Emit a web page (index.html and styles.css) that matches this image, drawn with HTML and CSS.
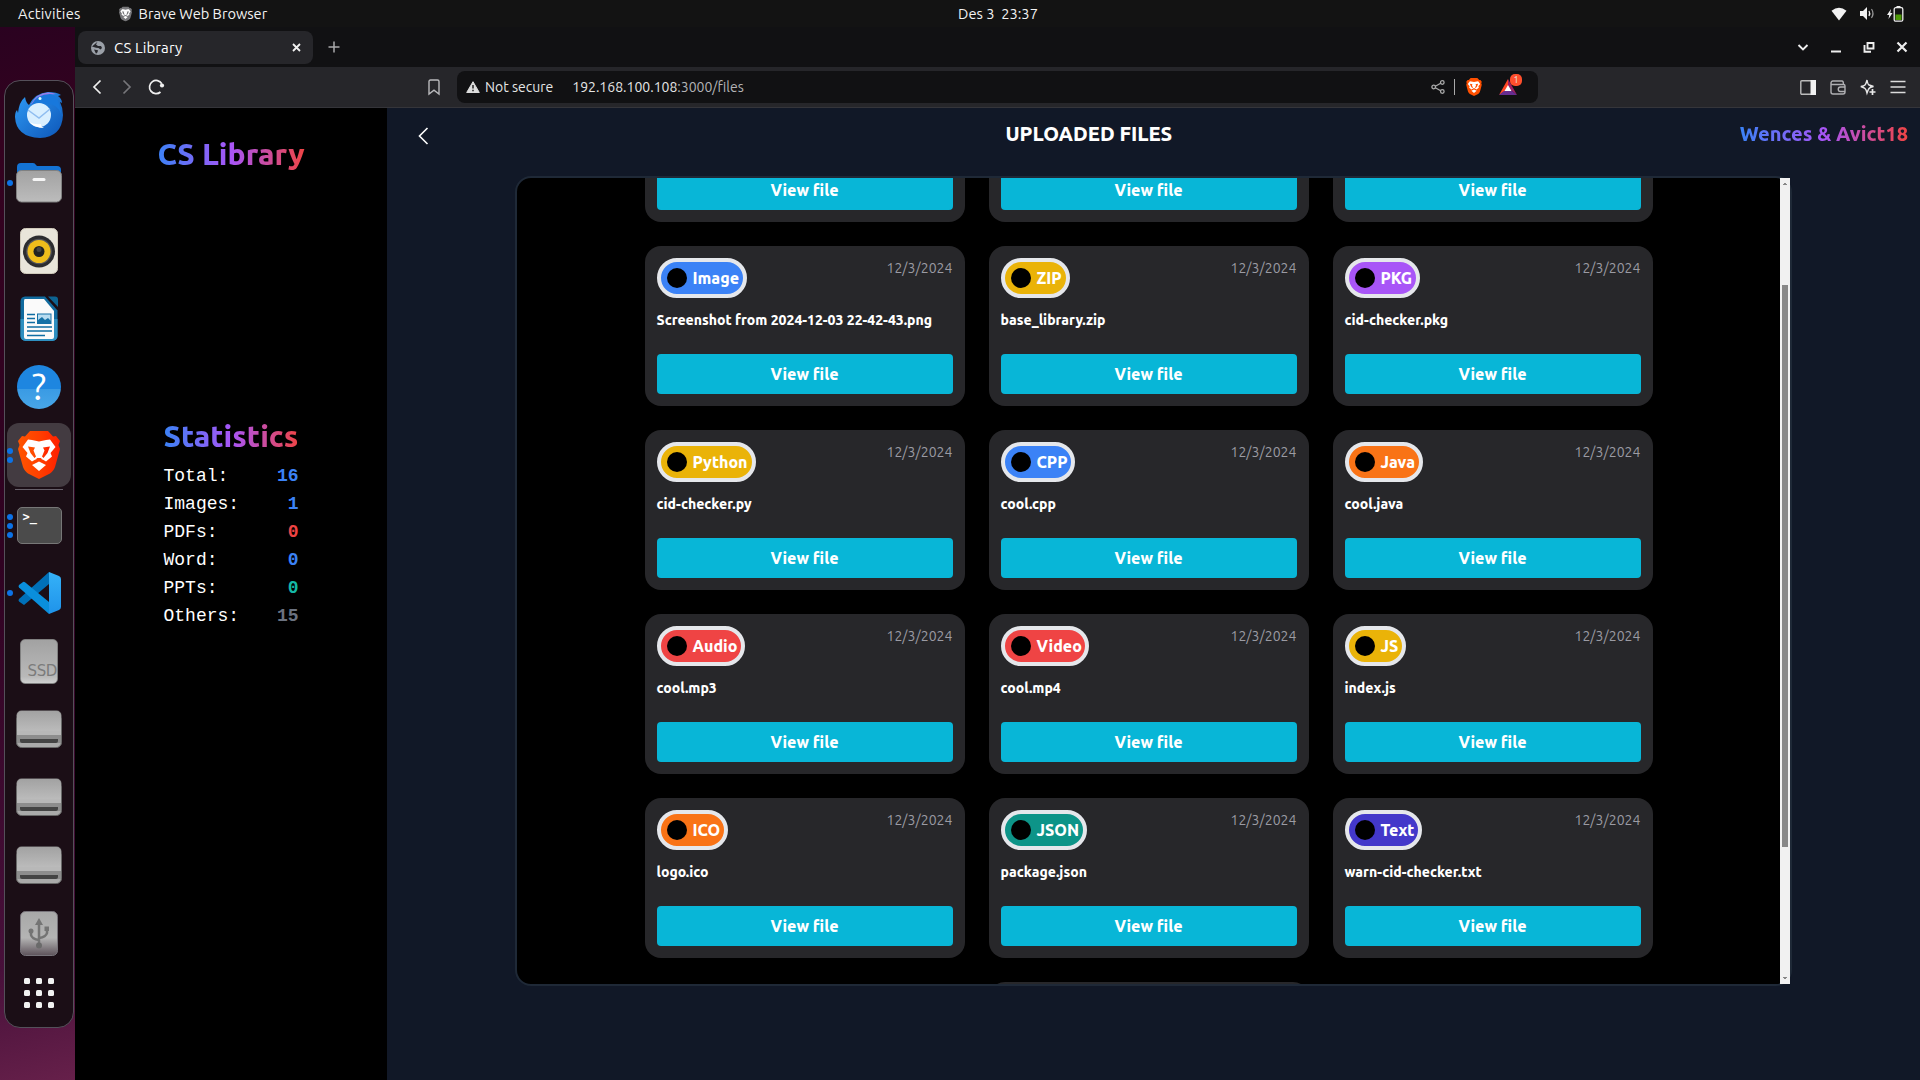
FILE: index.html
```html
<!DOCTYPE html>
<html lang="en">
<head>
<meta charset="utf-8">
<title>CS Library</title>
<link rel="stylesheet" href="styles.css">
</head>
<body>
<svg class="defs" width="0" height="0">
  <defs>
    <linearGradient id="gBird" x1="0" y1="0" x2="1" y2="1"><stop offset="0" stop-color="#2f9bf5"/><stop offset="1" stop-color="#0d56b8"/></linearGradient>
    <linearGradient id="gGrey" x1="0" y1="0" x2="0" y2="1"><stop offset="0" stop-color="#a2a2a2"/><stop offset="1" stop-color="#bcbcbc"/></linearGradient>
    <linearGradient id="gUsb" x1="0" y1="0" x2="0" y2="1"><stop offset="0" stop-color="#a8a8a8"/><stop offset=".6" stop-color="#b4b4b4"/><stop offset="1" stop-color="#5d525a"/></linearGradient>
    <linearGradient id="gLion" x1="0" y1="0" x2="1" y2="0"><stop offset="0" stop-color="#ff5500"/><stop offset=".5" stop-color="#ff4000"/><stop offset="1" stop-color="#ff1f00"/></linearGradient>
    <linearGradient id="gCode" x1="0" y1="0" x2="0" y2="1"><stop offset="0" stop-color="#35b2f8"/><stop offset="1" stop-color="#1f93ea"/></linearGradient>
    <symbol id="drive" viewBox="0 0 46 38">
      <rect x=".5" y=".5" width="45" height="32" rx="5" fill="#8b8b8b"/><rect x=".5" y="5" width="45" height="32.500" rx="5" fill="#8d8d8d" stroke="#686868"/>
      <path d="M1 22V6a5 5 0 0 1 5-5h34a5 5 0 0 1 5 5v16z" fill="url(#gGrey)"/>
      <path d="M1 26h44v6a5 5 0 0 1-5 5H6a5 5 0 0 1-5-5z" fill="#8d8d8d"/>
      <path d="M1 21h44v4H1z" fill="#b8b8b8"/><path d="M1.500 33h43a5 5 0 0 1-4.500 4H6a5 5 0 0 1-4.500-4z" fill="#aaa"/>
      <path d="M4 29h38v2a2 2 0 0 1-2 2H6a2 2 0 0 1-2-2z" fill="#444"/>
    </symbol>
    <symbol id="lion" viewBox="0 0 42 48">
      <path d="M12 0h18l5 5.500 3-.5 4 5-1.500 4L42 18l-5 18c-1 3-3 5-5 6.500L21 48 10 42.500C8 41 6 39 5 36L0 18l1.500-4L0 10l4-5 3 .5z"/>
      <path d="M21 10.500l7-1.500 4-.5 5.500 7.500-5 6 1.500 3.500-6 5-2.500-1.500-4.500-2-4.500 2-2.500 1.500-6-5 1.500-3.500-5-6L10 8.500l4 .5zM21 30.500l7 3.500-7 6-7-6z" fill="#fff"/>
      <path d="M10 15.500l7 1-1.500 3 2.500 6-1.500 1.500-4-5zM32 15.500l-7 1 1.500 3-2.500 6 1.500 1.500 4-5zM18 27h6l-3 2z"/>
    </symbol>
  </defs>
</svg>

<header class="topbar">
  <div class="topbar-left">
    <span class="activities">Activities</span>
    <span class="app"><svg class="app-icon" width="13" height="16" viewBox="0 0 42 48" fill="#77777a"><use href="#lion"/></svg>Brave Web Browser</span>
  </div>
  <span class="clock">Des 3&nbsp; 23:37</span>
  <div class="tray">
    <svg width="16" height="14" viewBox="0 0 16 14"><path d="M.5 3.800Q8-2.200 15.500 3.800L8 13.500z" fill="#f2f2f2"/></svg>
    <svg width="16" height="15" viewBox="0 0 16 15"><path d="M1 5h3l4-4v13l-4-4H1z" fill="#f2f2f2"/><path d="M10 5q1.500 2.500 0 5" fill="none" stroke="#eee" stroke-width="1.300"/><path d="M12.500 3q3 4.500 0 9" fill="none" stroke="#999" stroke-width="1.200"/></svg>
    <svg width="17" height="16" viewBox="0 0 17 16"><path d="M4 3L0 9h2.200L1.500 13l4-6H3.300z" fill="#f2f2f2"/><path d="M9.500 0h4v2h-4z" fill="#eee"/><rect x="7.200" y="1.700" width="8.600" height="13.500" rx="1.500" fill="none" stroke="#eee" stroke-width="1.300"/><path d="M8.500 8.500h6V14h-6z" fill="#4e9a06"/></svg>
  </div>
</header>

<div class="desktop">
  <aside class="dock-strip">
    <nav class="dock">
      <div class="slot">
        <svg width="48" height="46" viewBox="0 0 48 46"><path d="M10 5q1 6 4 8Q20 1 33 0q9 0 13 3l-3 1q4 3 4 7l-2-1q3 6 3 13Q47 45 25 46 1 45 0 25q0-5 2-7l1 3Q4 10 10 5z" fill="url(#gBird)"/><path d="M16 12Q22 1 33 .5q5 0 8 1.500Q30 2 24 9q-3 4-8 3z" fill="#9d7ce8"/><path d="M16 13Q22 2 35 2q9 1 11 20Q42 10 27 12q-7-1-11 1z" fill="#1878dc"/><circle cx="25" cy="6.500" r="1.500" fill="#dff"/><circle cx="24" cy="23" r="12" fill="#d9efff"/><path d="M13 18l11 8 11-9" fill="none" stroke="#8fbdf0" stroke-width="1.500"/><path d="M14 30q6 6 15 6-4-2-3-4-6 1-12-2z" fill="#fff"/></svg>
      </div>
      <div class="slot run1 files-app">
        <svg width="46" height="42" viewBox="0 0 46 42"><path d="M1 6a4 4 0 0 1 4-4h12q2 0 3 2l1 1h20a4 4 0 0 1 4 4v16H1z" fill="#1473d4"/><rect x=".5" y="9.500" width="45" height="31.500" rx="5" fill="url(#gGrey)" stroke="#808080"/><path d="M18 18.500h10" stroke="#f6f6f6" stroke-width="3" stroke-linecap="round"/></svg>
      </div>
      <div class="slot">
        <svg width="38" height="46" viewBox="0 0 38 46"><rect x=".5" y=".5" width="37" height="45" rx="5" fill="#e9e5da" stroke="#cfc9ba"/><circle cx="19" cy="23.500" r="16" fill="#2c2c2f"/><circle cx="19" cy="23.500" r="12.800" fill="#55555a"/><circle cx="19" cy="23.500" r="11.500" fill="#f0bd1b"/><circle cx="19" cy="23.500" r="5.500" fill="#222"/><circle cx="19" cy="21.500" r="2.500" fill="#444"/></svg>
      </div>
      <div class="slot">
        <svg width="38" height="46" viewBox="0 0 38 46"><path d="M5 .5h20l12.500 14V40a5 5 0 0 1-5 5h-27a5 5 0 0 1-5-5V5A5 5 0 0 1 5 .5z" fill="#106a9e"/><path d="M.5 23h37v17a5 5 0 0 1-5 5h-27a5 5 0 0 1-5-5z" fill="#2e8fc0"/><path d="M5 3h19l10 12v26a2 2 0 0 1-2 2H6a2 2 0 0 1-2-2V5q0-2 1-2z" fill="#fafafa"/><path d="M28 .5h7a3 3 0 0 1 3 3V11z" fill="#0d6391"/><path d="M7 18.500h8M7 22.500h8M7 26.500h8M7 31h25M7 35h25M7 39.500h18" stroke="#0f6da3" stroke-width="1.700"/><rect x="17.500" y="18" width="13.500" height="9.500" fill="#b8dcf0" stroke="#1571a6"/><path d="M18 27v-3l4-3 3 3 3-2 3 3v2z" fill="#1571a6"/></svg>
      </div>
      <div class="slot">
        <div class="help">?</div>
      </div>
      <div class="slot run2">
        <div class="tile"><svg width="42" height="48" viewBox="0 0 42 48" fill="url(#gLion)"><use href="#lion"/></svg></div>
      </div>
      <div class="rule"></div>
      <div class="slot run3">
        <div class="terminal">&gt;_</div>
      </div>
      <div class="slot run1">
        <svg width="43" height="42" viewBox="0 0 43 42"><path d="M31 0v12L6 33l-5-3.500Q0 28 1 27z" fill="#0070b8"/><path d="M1 13l4-3q1-.5 2 .2L31 30v12L1 15.500q-1-1.500 0-2.500z" fill="#0a8fdc"/><path d="M31 0l10 4q2 1 2 3v28q0 2-2 3l-10 4z" fill="url(#gCode)"/></svg>
      </div>
      <div class="slot"><div class="ssd">SSD</div></div>
      <div class="slot"><svg width="46" height="38"><use href="#drive"/></svg></div>
      <div class="slot"><svg width="46" height="38"><use href="#drive"/></svg></div>
      <div class="slot"><svg width="46" height="38"><use href="#drive"/></svg></div>
      <div class="slot">
        <svg width="38" height="45" viewBox="0 0 38 45"><rect x=".5" y=".5" width="37" height="44" rx="5" fill="url(#gUsb)" stroke="#77737a"/><g fill="none" stroke="#747474" stroke-width="2.500"><path d="M19 11v22M19 29q-7-1-8-5v-4M19 27q7-1 8-5v-4"/></g><path d="M19 7l4 7h-8zM24.500 15.500h4.500v4.500h-4.500z" fill="#747474"/><circle cx="11" cy="20" r="2.500" fill="#747474"/><circle cx="19" cy="34.500" r="3" fill="#6a6a6a"/></svg>
      </div>
      <div class="apps"><i></i><i></i><i></i><i></i><i></i><i></i><i></i><i></i><i></i></div>
    </nav>
  </aside>

  <div class="browser">
    <div class="tabstrip">
      <div class="tab">
        <svg width="14" height="14" viewBox="0 0 14 14"><circle cx="7" cy="7" r="7" fill="#9ba0a8"/><path d="M6.500.8L5 3.500l2 1.500h3l1 2-1.500 1.500L7.500 7 5 6.800 1 5.500zM3 8.500l4 .8-.5 2L5 12.800z" fill="#26262b"/></svg>
        <span class="tab-title">CS Library</span>
        <svg width="9" height="9" viewBox="0 0 9 9"><path d="M1 1l7 7M8 1L1 8" stroke="#f1f1f1" stroke-width="1.800"/></svg>
      </div>
      <svg class="plus" width="12" height="12" viewBox="0 0 12 12"><path d="M6 .5v11M.5 6h11" stroke="#a9a9ac" stroke-width="1.500"/></svg>
      <div class="window-controls">
        <svg width="12" height="12" viewBox="0 0 12 12"><path d="M1.500 4L6 8.500 10.500 4" fill="none" stroke="#eee" stroke-width="1.900"/></svg>
        <svg width="12" height="12" viewBox="0 0 12 12"><path d="M1 10.500h10" stroke="#eee" stroke-width="2"/></svg>
        <svg width="12" height="12" viewBox="0 0 12 12"><path d="M4.500 2h6v5.500h-6zM1.500 4v6.700H8" fill="none" stroke="#eee" stroke-width="1.900"/></svg>
        <svg width="12" height="12" viewBox="0 0 12 12"><path d="M1.500 1.500l9 9M10.500 1.500l-9 9" stroke="#eee" stroke-width="2.200"/></svg>
      </div>
    </div>

    <div class="toolbar">
      <div class="nav-buttons">
        <svg width="10" height="16" viewBox="0 0 10 16"><path d="M8.500 1.500L2 8l6.500 6.500" fill="none" stroke="#efefef" stroke-width="1.700"/></svg>
        <svg width="10" height="16" viewBox="0 0 10 16"><path d="M1.500 1.500L8 8l-6.500 6.500" fill="none" stroke="#76767a" stroke-width="1.700"/></svg>
        <svg class="reload" width="17" height="16" viewBox="0 0 17 16"><path d="M12.500 13A6.600 6.600 0 1 1 13.800 4.700" fill="none" stroke="#efefef" stroke-width="1.700"/><circle cx="14" cy="6.500" r="2.100" fill="#efefef"/></svg>
      </div>
      <svg class="bookmark" width="12" height="16" viewBox="0 0 12 16"><path d="M1 2.500Q1 1 2.500 1h7Q11 1 11 2.500V15l-5-3.800L1 15z" fill="none" stroke="#b9b9bc" stroke-width="1.400"/></svg>
      <div class="urlbar">
        <svg width="14" height="12" viewBox="0 0 14 12"><path d="M7 .7L13.300 11.500H.7z" fill="#ddd" stroke="#ddd" stroke-linejoin="round"/><path d="M7 4v3.500M7 8.700v1.500" stroke="#222" stroke-width="1.500"/></svg>
        <span class="not-secure">Not secure</span>
        <span class="url">192.168.100.108<span class="path">:3000/files</span></span>
        <svg class="share" width="14" height="14" viewBox="0 0 14 14"><path d="M3 7l8-4.500M3 7l8 4.500" stroke="#aaa" stroke-width="1.300"/><g fill="#111113" stroke="#aaa" stroke-width="1.300"><circle cx="2.700" cy="7" r="1.800"/><circle cx="11.300" cy="2.500" r="1.800"/><circle cx="11.300" cy="11.500" r="1.800"/></g></svg>
        <i class="sep"></i>
        <svg class="shield" width="16" height="18" viewBox="0 0 42 48" fill="#ff5000"><use href="#lion"/></svg>
        <span class="bat"><svg width="18" height="16" viewBox="0 0 18 16"><path d="M9 0L0 16l9-6z" fill="#ff4724"/><path d="M9 0l9 16-9-7z" fill="#9e1f63"/><path d="M0 16h18l-5-4H5z" fill="#662d91"/><path d="M9 6l3.500 6h-7z" fill="#fff"/></svg><b>1</b></span>
      </div>
      <div class="actions">
        <svg width="16" height="15" viewBox="0 0 16 15"><rect x=".8" y=".8" width="14.400" height="13.400" rx="1" fill="none" stroke="#bbb" stroke-width="1.400"/><path d="M10.500 0H16v15h-5.500z" fill="#f2f2f2"/></svg>
        <svg width="16" height="15" viewBox="0 0 16 15"><path d="M1 2.500V12q0 2 2 2h10q2 0 2-2V6q0-1.500-1.500-1.500H1M1 3.500Q1 1 3 1h9q1.500 0 1.500 3.500M15 7h-4.500a2 2 0 0 0 0 4.500H15" fill="none" stroke="#b0b0b3" stroke-width="1.400"/></svg>
        <svg width="16" height="16" viewBox="0 0 16 16"><path d="M7 1q.8 4.500 2 5t4.500 1.500Q10 8 9 9.500T7 14q-.8-3.500-2-4.500T.8 7.500Q4 7 5 6t2-5z" fill="none" stroke="#e8e8e8" stroke-width="1.400"/><path d="M12.500 10v6M9.500 13h6" stroke="#e8e8e8" stroke-width="1.700"/></svg>
        <svg width="16" height="14" viewBox="0 0 16 14"><path d="M.5 1.500h15M.5 7h15M.5 12.500h15" stroke="#dcdcdc" stroke-width="1.400"/></svg>
      </div>
    </div>

    <div class="page">
      <aside class="sidebar">
        <h1 class="grad brand">CS Library</h1>
        <section class="stats">
          <h2 class="grad stats-title">Statistics</h2>
          <div class="stat"><span>Total:</span><b class="c-blue">16</b></div>
          <div class="stat"><span>Images:</span><b class="c-blue">1</b></div>
          <div class="stat"><span>PDFs:</span><b class="c-red">0</b></div>
          <div class="stat"><span>Word:</span><b class="c-blue">0</b></div>
          <div class="stat"><span>PPTs:</span><b class="c-teal">0</b></div>
          <div class="stat"><span>Others:</span><b class="c-gray">15</b></div>
        </section>
      </aside>

      <main class="main">
        <header class="page-head">
          <svg width="11" height="18" viewBox="0 0 11 18"><path d="M9.500 1L1.500 9l8 8" fill="none" stroke="#fff" stroke-width="1.600"/></svg>
          <h2 class="heading">UPLOADED FILES</h2>
          <span class="grad authors">Wences &amp; Avict18</span>
        </header>

        <section class="panel">
          <div class="viewport">
            <div class="files">
              <article class="card"><a class="view">View file</a></article>
              <article class="card"><a class="view">View file</a></article>
              <article class="card"><a class="view">View file</a></article>

              <article class="card"><div class="meta"><span class="tag blue w-image">Image</span><time>12/3/2024</time></div><p>Screenshot from 2024-12-03 22-42-43.png</p><a class="view">View file</a></article>
              <article class="card"><div class="meta"><span class="tag yellow w-zip">ZIP</span><time>12/3/2024</time></div><p>base_library.zip</p><a class="view">View file</a></article>
              <article class="card"><div class="meta"><span class="tag purple w-pkg">PKG</span><time>12/3/2024</time></div><p>cid-checker.pkg</p><a class="view">View file</a></article>

              <article class="card"><div class="meta"><span class="tag yellow w-python">Python</span><time>12/3/2024</time></div><p>cid-checker.py</p><a class="view">View file</a></article>
              <article class="card"><div class="meta"><span class="tag blue w-cpp">CPP</span><time>12/3/2024</time></div><p>cool.cpp</p><a class="view">View file</a></article>
              <article class="card"><div class="meta"><span class="tag orange w-java">Java</span><time>12/3/2024</time></div><p>cool.java</p><a class="view">View file</a></article>

              <article class="card"><div class="meta"><span class="tag red w-audio">Audio</span><time>12/3/2024</time></div><p>cool.mp3</p><a class="view">View file</a></article>
              <article class="card"><div class="meta"><span class="tag red w-video">Video</span><time>12/3/2024</time></div><p>cool.mp4</p><a class="view">View file</a></article>
              <article class="card"><div class="meta"><span class="tag yellow w-js">JS</span><time>12/3/2024</time></div><p>index.js</p><a class="view">View file</a></article>

              <article class="card"><div class="meta"><span class="tag orange w-ico">ICO</span><time>12/3/2024</time></div><p>logo.ico</p><a class="view">View file</a></article>
              <article class="card"><div class="meta"><span class="tag teal w-json">JSON</span><time>12/3/2024</time></div><p>package.json</p><a class="view">View file</a></article>
              <article class="card"><div class="meta"><span class="tag indigo w-text">Text</span><time>12/3/2024</time></div><p>warn-cid-checker.txt</p><a class="view">View file</a></article>

              <article class="card"></article>
            </div>
          </div>
          <div class="scrollbar">
            <svg width="4" height="2" viewBox="0 0 4 2"><path d="M0 2V1h1V0h2v1h1v1z" fill="#888"/></svg>
            <i class="thumb"></i>
            <svg width="4" height="2" viewBox="0 0 4 2"><path d="M0 0v1h1v1h2V1h1V0z" fill="#888"/></svg>
          </div>
        </section>
      </main>
    </div>
  </div>
</div>
</body>
</html>
```

FILE: styles.css
```css
* { box-sizing: border-box; margin: 0; padding: 0; }

body {
  width: 1920px;
  height: 1080px;
  overflow: hidden;
  display: flex;
  flex-direction: column;
  background: #000;
  color: #fff;
  font-family: Ubuntu, "Noto Sans", sans-serif;
}

svg { display: block; flex: none; overflow: visible; }
.defs { position: absolute; }

/* system bar */
.topbar {
  flex: none;
  height: 27px;
  display: grid;
  grid-template-columns: 1fr auto 1fr;
  align-items: center;
  padding: 0 24px 0 18px;
  background: #131313;
  color: #f2f2f2;
  font-size: 14.67px;
}
.topbar-left { display: flex; align-items: center; gap: 38px; }
.activities { letter-spacing: .25px; }
.app { display: flex; align-items: center; gap: 7px; letter-spacing: -.03px; }
.clock { margin-left: 82px; }
.tray { display: flex; justify-content: flex-end; align-items: center; gap: 12px; margin-right: -8px; }

.desktop { flex: 1; min-height: 0; display: flex; }

/* launcher */
.dock-strip {
  flex: none;
  width: 75px;
  padding: 53px 0 0 4px;
  background: linear-gradient(165deg, #2a0220 0%, #33021f 10%, #2f0221 50%, #47103a 88%, #66204a 100%);
}
.dock {
  width: 70px;
  height: 948px;
  border: 1px solid #55505a;
  border-radius: 16px;
  background: #1b0e16;
}
.slot {
  position: relative;
  height: 68px;
  display: flex;
  align-items: center;
  justify-content: center;
}
.files-app { padding-bottom: 3px; }
.run1::before, .run2::before, .run3::before {
  content: "";
  position: absolute;
  left: 2px;
  top: 31px;
  width: 6px;
  height: 6px;
  border-radius: 50%;
  background: #0c72e6;
}
.run2::before { top: 27px; box-shadow: 0 9px #0c72e6; z-index: 1; }
.run3::before { top: 23px; box-shadow: 0 9px #0c72e6, 0 18px #0c72e6; }
.help {
  width: 44px;
  height: 44px;
  border-radius: 50%;
  background: linear-gradient(#1e86e0 0 54%, #3a9be4 55%, #48a6e8);
  font: 37px/44px Ubuntu, "Noto Sans", sans-serif;
  text-align: center;
}
.tile {
  width: 64px;
  height: 64px;
  display: grid;
  place-items: center;
  border-radius: 12px;
  background: #433b41;
}
.rule { height: 1px; margin: 0 10px 1px; background: #67606a; }
.terminal {
  width: 45px;
  height: 37px;
  padding: 1px 0 0 5px;
  border: 1px solid #777;
  border-radius: 5px;
  background: #4b4b4b;
  font: bold 12px/16px "DejaVu Sans Mono", monospace;
}
.ssd {
  width: 38px;
  height: 45px;
  border: 1px solid #808080;
  border-radius: 5px;
  background: linear-gradient(#a2a2a2, #b9b9b9 85%, #cfcfcf);
  color: #7b7b7b;
  font: 15px/62px "DejaVu Sans", sans-serif;
  text-align: right;
  letter-spacing: -.4px;
  overflow: hidden;
}
.apps {
  display: grid;
  grid-template-columns: repeat(3, 6px);
  gap: 6px;
  justify-content: center;
  padding-top: 11px;
}
.apps i { height: 6px; border-radius: 1.500px; background: #f2f2f2; }

/* browser chrome */
.browser { flex: 1; min-width: 0; display: flex; flex-direction: column; }
.tabstrip {
  flex: none;
  height: 40px;
  display: flex;
  align-items: center;
  padding: 1px 12px 0 3px;
  background: #111113;
}
.tab {
  width: 235px;
  height: 33px;
  display: flex;
  align-items: center;
  gap: 9px;
  padding: 0 12px 0 13px;
  border-radius: 8px;
  background: #26262a;
  font-size: 15px;
}
.tab-title { flex: 1; letter-spacing: .1px; }
.plus { margin: 0 0 2px 15px; }
.window-controls { display: flex; gap: 21px; margin: 0 0 2px auto; }

.toolbar {
  flex: none;
  height: 41px;
  display: flex;
  align-items: center;
  border-bottom: 1px solid #35353a;
  background: #26262a;
  font-size: 14px;
}
.nav-buttons { display: flex; gap: 20px; width: 353px; padding-left: 17px; }
.reload { margin-left: -4px; }
.urlbar {
  width: 1081px;
  height: 32px;
  display: flex;
  align-items: center;
  margin-left: 17px;
  padding: 0 21px 0 9px;
  border-radius: 8px;
  background: #111113;
  color: #e6e6e6;
}
.not-secure { margin-left: 5px; }
.url { flex: 1; margin-left: 19px; }
.path { color: #b4b4b6; }
.sep { width: 1px; height: 16px; margin: 0 11px 0 9px; background: #aaa; }
.bat { position: relative; margin-left: 17px; }
.bat b {
  position: absolute;
  left: 11px;
  top: -5px;
  width: 12px;
  height: 12px;
  border-radius: 5px;
  background: #ff4f2c;
  font: 9px/12px Ubuntu, "Noto Sans", sans-serif;
  text-align: center;
}
.actions { display: flex; align-items: center; gap: 14px; margin-left: auto; padding-right: 14px; }

/* web page */
.page { flex: 1; min-height: 0; display: flex; }
.grad {
  background: linear-gradient(to right, #3b82f6, #a855f7, #ef4444);
  -webkit-background-clip: text;
  background-clip: text;
  color: transparent;
}
.sidebar {
  flex: none;
  width: 312px;
  display: flex;
  flex-direction: column;
  align-items: center;
  padding-top: 28px;
  background: #000;
}
.brand { font-size: 30px; font-weight: 800; line-height: 36px; }
.stats { width: 135px; margin-top: 246px; }
.stats-title { font-size: 30px; font-weight: 800; line-height: 36px; margin-bottom: 8px; white-space: nowrap; }
.stat {
  display: flex;
  justify-content: space-between;
  font: 18px/28px "Liberation Mono", monospace;
}
.c-blue { color: #3b82f6; }
.c-red { color: #ef4444; }
.c-teal { color: #14b8a6; }
.c-gray { color: #6b7280; }

.main { flex: 1; min-width: 0; background: #111827; }
.page-head {
  height: 68px;
  display: flex;
  justify-content: space-between;
  align-items: flex-start;
  padding: 12px 12px 0 31px;
  font-size: 20px;
  line-height: 28px;
}
.page-head svg { margin: 7px 9px 0 0; }
.heading { font-size: 20px; font-weight: 800; }
.authors { font-weight: 800; }

.panel {
  width: 1277px;
  height: 810px;
  display: flex;
  margin-left: 128px;
  border: 2px solid #1f2937;
  border-radius: 16px;
  background: #000;
}
.viewport { flex: 1; height: 806px; overflow: hidden; border-radius: 14px 0 0 14px; }
.files {
  display: flex;
  flex-wrap: wrap;
  justify-content: center;
  gap: 24px;
  margin-top: -116px;
  padding: 0 120px;
}
.card {
  width: 320px;
  height: 160px;
  display: flex;
  flex-direction: column;
  padding: 12px;
  border-radius: 16px;
  background: #27272a;
}
.meta { display: flex; justify-content: space-between; align-items: flex-start; height: 40px; }
.tag {
  height: 40px;
  display: flex;
  align-items: center;
  gap: 6px;
  padding-left: 6px;
  border: 4px solid #e5e7eb;
  border-radius: 20px;
  font-weight: 800;
  font-size: 16px;
  white-space: nowrap;
}
.tag::before { content: ""; flex: none; width: 20px; height: 20px; border-radius: 50%; background: #000; }
.blue { background: #3b82f6; }
.yellow { background: #eab308; }
.purple { background: #a855f7; }
.orange { background: #f97316; }
.red { background: #ef4444; }
.teal { background: #0d9488; }
.indigo { background: #4338ca; }
.w-image { width: 90px; }
.w-zip { width: 69px; }
.w-pkg { width: 75px; }
.w-python { width: 99px; }
.w-cpp { width: 74px; }
.w-java { width: 78px; }
.w-audio, .w-video { width: 88px; }
.w-js { width: 61px; }
.w-ico { width: 71px; }
.w-json { width: 86px; }
.w-text { width: 77px; }
time { color: #9b9ba3; font-size: 14px; line-height: 20px; letter-spacing: .05px; }
.card p { margin-top: 12px; font-size: 14px; font-weight: 800; line-height: 20px; white-space: nowrap; }
.view {
  height: 40px;
  margin-top: auto;
  border-radius: 4px;
  background: #08b6d7;
  font-size: 16px;
  font-weight: 800;
  line-height: 40px;
  text-align: center;
}
.scrollbar {
  width: 10px;
  height: 806px;
  display: flex;
  flex-direction: column;
  align-items: center;
  padding: 5px 0;
  background: #f1f1f1;
}
.thumb { width: 6px; height: 562px; margin: 100px 0 auto; background: #888; }
```
